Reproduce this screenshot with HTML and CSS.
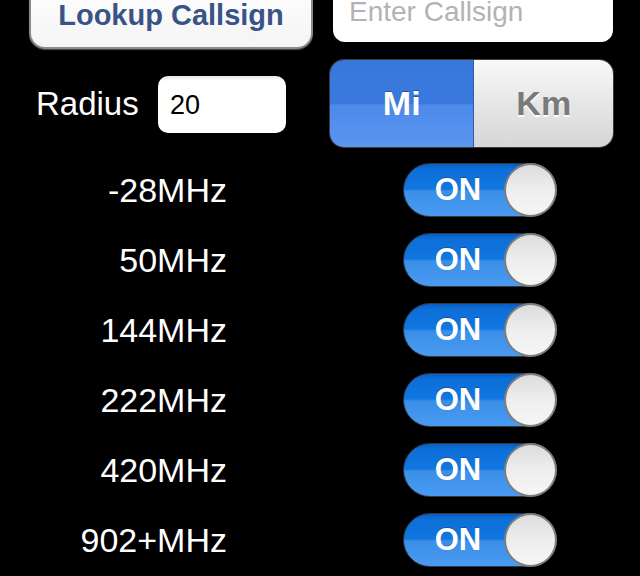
FILE: index.html
```html
<!DOCTYPE html>
<html lang="en">
<head>
    <meta charset="UTF-8">
    <title>Repeater Search</title>
    <link rel="stylesheet" href="styles.css">
</head>
<body>
    <!-- Callsign lookup -->
    <div class="top-row">
        <button class="lookup-btn">Lookup Callsign</button>
        <input class="callsign-input" type="text" placeholder="Enter Callsign">
    </div>

    <!-- Radius + units -->
    <div class="radius-row">
        <span class="radius-label">Radius</span>
        <input class="radius-input" type="text" value="20">
        <div class="segmented">
            <span class="segment selected">Mi</span>
            <span class="segment">Km</span>
        </div>
    </div>

    <!-- Bands -->
    <div class="bands">
        <div class="band-row">
            <span class="band-label">-28MHz</span>
            <div class="switch"><span class="switch-text">ON</span><span class="knob"></span></div>
        </div>
        <div class="band-row">
            <span class="band-label">50MHz</span>
            <div class="switch"><span class="switch-text">ON</span><span class="knob"></span></div>
        </div>
        <div class="band-row">
            <span class="band-label">144MHz</span>
            <div class="switch"><span class="switch-text">ON</span><span class="knob"></span></div>
        </div>
        <div class="band-row">
            <span class="band-label">222MHz</span>
            <div class="switch"><span class="switch-text">ON</span><span class="knob"></span></div>
        </div>
        <div class="band-row">
            <span class="band-label">420MHz</span>
            <div class="switch"><span class="switch-text">ON</span><span class="knob"></span></div>
        </div>
        <div class="band-row">
            <span class="band-label">902+MHz</span>
            <div class="switch"><span class="switch-text">ON</span><span class="knob"></span></div>
        </div>
    </div>
</body>
</html>
```

FILE: styles.css
```css
body {
    margin: 0;
    padding: 0;
    overflow: hidden;
    background-color: #000;
    font-family: "Liberation Sans", Arial, sans-serif;
    color: #fff;
}

/* top row, partly scrolled off screen */
.top-row {
    display: flex;
    align-items: flex-start;
    margin-top: -20px;
    padding-left: 29px;
}

.lookup-btn {
    width: 284px;
    height: 69px;
    padding: 0;
    border: 2px solid #8a8a8a;
    border-radius: 16px;
    background: linear-gradient(#ffffff, #f4f4f4);
    box-shadow: 0 1px 1px rgba(255, 255, 255, 0.3);
    font-family: "Liberation Sans", Arial, sans-serif;
    font-size: 29px;
    font-weight: bold;
    line-height: 30px;
    color: #385487;
}

.callsign-input {
    box-sizing: border-box;
    width: 280px;
    height: 62px;
    margin-left: 20px;
    padding: 2px 16px 0;
    border: none;
    border-radius: 12px;
    background-color: #fff;
    font-family: "Liberation Sans", Arial, sans-serif;
    font-size: 28px;
    line-height: 32px;
    outline: none;
}

.callsign-input::placeholder {
    color: #b3b3b3;
}

/* radius row */
.radius-row {
    display: flex;
    align-items: center;
    margin-top: 11px;
    padding-left: 36px;
}

.radius-label {
    width: 103px;
    font-size: 33px;
    line-height: 38px;
}

.radius-input {
    box-sizing: border-box;
    width: 128px;
    height: 57px;
    margin-left: 19px;
    margin-top: 2px;
    padding: 2px 12px 0;
    border: none;
    border-radius: 10px;
    background: linear-gradient(#e6e6e6, #ffffff 5px);
    font-family: "Liberation Sans", Arial, sans-serif;
    font-size: 27px;
    color: #000;
    outline: none;
}

.segmented {
    display: flex;
    width: 283px;
    height: 87px;
    margin-left: 44px;
    border-radius: 14px;
    overflow: hidden;
    box-shadow: 0 0 0 1px #3c3c3c;
}

.segment {
    display: flex;
    align-items: center;
    justify-content: center;
    font-size: 34px;
    font-weight: bold;
    width: 139px;
    color: #7a7a7a;
    text-shadow: 0 2px 0 #fff;
    background: linear-gradient(#f9f9f9, #e6e6e6 50%, #d6d6d6);
}

.segment.selected {
    width: 144px;
    color: #fff;
    text-shadow: 0 -1px 0 rgba(0, 0, 0, 0.3);
    background: linear-gradient(#3877db, #3a79dd 50%, #4d8aea 52%, #5a95ee);
    border-right: 1px solid #2a5cb0;
}

/* band switches */
.bands {
    margin-top: 8px;
}

.band-row {
    display: flex;
    align-items: center;
    height: 70px;
}

.band-label {
    width: 227px;
    text-align: right;
    font-size: 34px;
}

.switch {
    position: relative;
    box-sizing: border-box;
    width: 154px;
    height: 54px;
    margin-left: 176px;
    border: 1px solid #2e3a48;
    border-radius: 27px;
    background: linear-gradient(#0a5cc0, #0d6fd8 10%, #1176e0 48%, #3a8fe8 52%, #4a9af0);
}

.switch-text {
    display: block;
    width: 108px;
    text-align: center;
    font-size: 31px;
    font-weight: bold;
    line-height: 52px;
    color: #fff;
    text-shadow: 0 -1px 0 rgba(0, 0, 0, 0.25);
}

.knob {
    position: absolute;
    top: -1px;
    right: -1px;
    box-sizing: border-box;
    width: 53px;
    height: 54px;
    border: 2px solid #7e7e7e;
    border-radius: 50%;
    background: linear-gradient(#dcdcdc, #eeeeee 50%, #f6f6f6);
}
```
